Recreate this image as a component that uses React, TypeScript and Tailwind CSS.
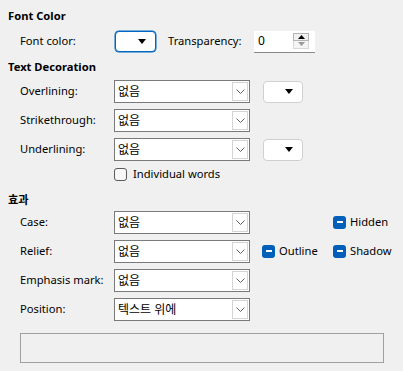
import { useState } from "react";

const font = { fontFamily: '"Noto Sans", "Noto Sans CJK KR", sans-serif' };

const Chevron = () => (
  <svg width="9" height="5" viewBox="0 0 9 5" className="text-[#606060]">
    <path d="M0.5 0.5 L4.5 4.5 L8.5 0.5" fill="none" stroke="currentColor" strokeWidth="1" />
  </svg>
);

const Triangle = () => (
  <svg width="8" height="5" viewBox="0 0 8 5">
    <path d="M0 0 H8 L4 5 Z" fill="#000" />
  </svg>
);

const Combo = ({ value }: { value: string }) => (
  <div className="flex h-[23px] w-[136px] border border-[#7a7a7a] bg-white">
    <div className="flex flex-1 items-center pl-[3px] text-[12px] text-black">{value}</div>
    <div className="my-[1px] mr-[1px] flex w-[16px] items-center justify-center border border-[#d4d4d4] bg-white">
      <Chevron />
    </div>
  </div>
);

const ColorButton = ({ focused }: { focused?: boolean }) => (
  <div
    className={
      focused
        ? "flex h-[21px] w-[41px] items-center justify-end rounded-[4px] border border-[#0067c0] bg-white pr-[9px] shadow-[0_0_0_0.5px_#0067c0]"
        : "flex h-[22px] w-[40px] items-center justify-end rounded-[4px] border border-[#d0d0d0] bg-white pr-[9px]"
    }
  >
    <Triangle />
  </div>
);

const Mixed = ({ label, className }: { label: string; className?: string }) => (
  <div className={"flex items-center gap-[4px] " + (className ?? "")}>
    <div className="flex h-[13px] w-[13px] items-center justify-center rounded-[3px] bg-[#005fb8]">
      <div className="h-[2px] w-[6px] bg-white" />
    </div>
    <span className="text-[11.2px] text-black">{label}</span>
  </div>
);

const Row = ({ label, className, children }: { label: string; className?: string; children: React.ReactNode }) => (
  <div className={"flex items-center " + (className ?? "")}>
    <div className="w-[106px] shrink-0 whitespace-nowrap pl-[12px] text-[11.2px] text-black">{label}</div>
    {children}
  </div>
);

export default function App() {
  const [words, setWords] = useState(false);

  return (
    <div className="h-[371px] w-[403px] overflow-hidden bg-[#f0f0f0] pl-[8px] pt-[6px]" style={font}>
      {/* Font Color */}
      <div className="flex h-[20px] items-center text-[11.2px] font-bold text-black">Font Color</div>
      <div className="mt-[5px] flex h-[21px] items-center">
        <div className="w-[107px] shrink-0 pl-[12px] text-[11.2px] text-black">Font color:</div>
        <ColorButton focused />
        <div className="ml-[12px] w-[86px] shrink-0 text-[11.2px] text-black">Transparency:</div>
        <div className="flex h-[22px] w-[61px] items-start border-b border-[#8a8a8a] bg-white">
          <div className="flex h-full flex-1 items-center pl-[4px] text-[12px] text-black">0</div>
          <div className="mr-[6px] mt-[2px] flex w-[16px] flex-col">
            <div className="flex h-[8px] items-center justify-center border border-[#b4b4b4] bg-[#f0f0f0]">
              <svg width="7" height="4" viewBox="0 0 7 4"><path d="M0 4 H7 L3.5 0 Z" fill="#000" /></svg>
            </div>
            <div className="flex h-[8px] items-center justify-center border border-t-0 border-[#d8d8d8] bg-[#f4f4f4]">
              <svg width="7" height="4" viewBox="0 0 7 4"><path d="M0 0 H7 L3.5 4 Z" fill="#9a9a9a" /></svg>
            </div>
          </div>
        </div>
      </div>

      {/* Text Decoration */}
      <div className="mt-[5px] flex h-[20px] items-center text-[11.2px] font-bold text-black">Text Decoration</div>
      <Row label="Overlining:" className="mt-[3px]">
        <Combo value="없음" />
        <div className="ml-[13px]">
          <ColorButton />
        </div>
      </Row>
      <Row label="Strikethrough:" className="mt-[6px]">
        <Combo value="없음" />
      </Row>
      <Row label="Underlining:" className="mt-[6px]">
        <Combo value="없음" />
        <div className="ml-[13px]">
          <ColorButton />
        </div>
      </Row>
      <div className="mt-[6px] flex h-[14px] items-center pl-[106px]">
        <button
          onClick={() => setWords(!words)}
          className="flex items-center gap-[6px] text-[11.2px] text-black"
        >
          <span className="h-[13px] w-[13px] rounded-[3px] border border-[#5a5a5a] bg-[#f7f7f7]" />
          Individual words
        </button>
      </div>

      {/* 효과 */}
      <div className="mt-[9px] flex h-[20px] items-center text-[11.2px] font-bold text-black">효과</div>
      <Row label="Case:" className="mt-[1px]">
        <Combo value="없음" />
        <Mixed label="Hidden" className="ml-[83px]" />
      </Row>
      <Row label="Relief:" className="mt-[6px]">
        <Combo value="없음" />
        <Mixed label="Outline" className="ml-[12px] w-[71px]" />
        <Mixed label="Shadow" />
      </Row>
      <Row label="Emphasis mark:" className="mt-[6px]">
        <Combo value="없음" />
      </Row>
      <Row label="Position:" className="mt-[6px]">
        <Combo value="텍스트 위에" />
      </Row>

      {/* Preview */}
      <div className="ml-[12px] mt-[12px] h-[30px] w-[364px] border border-[#a0a0a0] bg-[#f0f0f0]" />
    </div>
  );
}
